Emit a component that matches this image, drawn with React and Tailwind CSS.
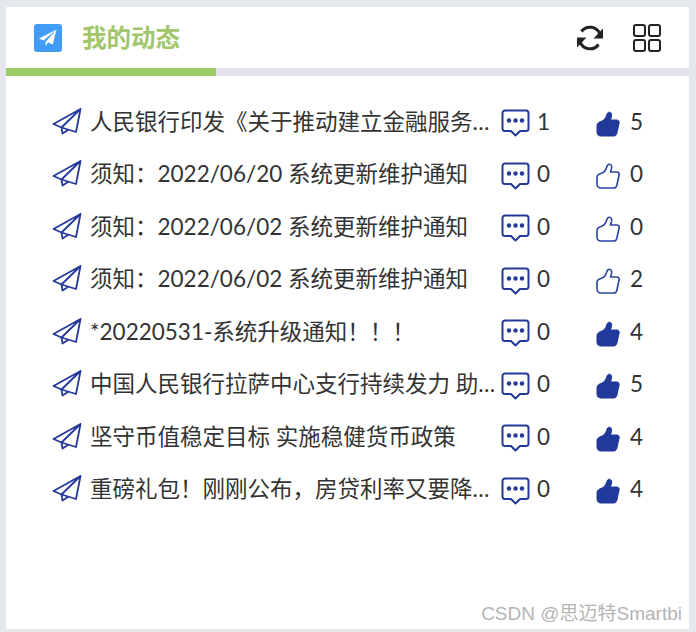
const rows = [
  { title: '人民银行印发《关于推动建立金融服务小微企业敢贷愿贷能贷会贷长效机制的通知》', comments: 1, likes: 5, liked: true },
  { title: '须知：2022/06/20 系统更新维护通知', comments: 0, likes: 0, liked: false },
  { title: '须知：2022/06/02 系统更新维护通知', comments: 0, likes: 0, liked: false },
  { title: '须知：2022/06/02 系统更新维护通知', comments: 0, likes: 2, liked: false },
  { title: '*20220531-系统升级通知！！！', comments: 0, likes: 4, liked: true },
  { title: '中国人民银行拉萨中心支行持续发力 助力小微企业发展', comments: 0, likes: 5, liked: true },
  { title: '坚守币值稳定目标 实施稳健货币政策', comments: 0, likes: 4, liked: true },
  { title: '重磅礼包！刚刚公布，房贷利率又要降了，买房人迎来好消息', comments: 0, likes: 4, liked: true },
];

function PlaneIcon() {
  return (
    <svg width="30" height="28" viewBox="0 0 30 28" fill="none" stroke="#24399a" strokeWidth="1.8" strokeLinejoin="round" strokeLinecap="round" className="-mt-[3px] shrink-0">
      <path d="M28.500 2 1.500 17l8 3.500L28.500 2l-4.500 23-14.500-4.500" />
      <path d="M9.500 20.500 10.500 26.500l5.500-3.500" />
    </svg>
  );
}

function CommentIcon() {
  return (
    <svg width="29" height="29" viewBox="0 0 29 29" fill="none" className="mt-[3px] shrink-0">
      <path d="M4 1.500h21a2.500 2.500 0 0 1 2.500 2.500v15.500a2.500 2.500 0 0 1-2.500 2.500h-6l-4.500 4.500-4.500-4.500H4a2.500 2.500 0 0 1-2.500-2.500V4A2.500 2.500 0 0 1 4 1.500Z" stroke="#24399a" strokeWidth="2" strokeLinejoin="round" />
      <circle cx="8" cy="11.500" r="2.200" fill="#24399a" />
      <circle cx="14.500" cy="11.500" r="2.200" fill="#24399a" />
      <circle cx="21" cy="11.500" r="2.200" fill="#24399a" />
    </svg>
  );
}

function ThumbIcon({ filled }) {
  return (
    <svg width="24" height="26" viewBox="0 0 24 26" className="mt-[3px] shrink-0" fill={filled ? '#20399a' : 'none'} stroke={filled ? '#20399a' : '#2b43a0'} strokeWidth={filled ? 1 : 1.6} strokeLinejoin="round">
      <path d="M1 14.500C1 12.500 3 11 5 10.500c3-1 4.800-3.500 5.500-6C11 2.500 11.800 1 13.500 1.200c2 .3 2.500 2.300 2 4.300l-1 3.500h6.300c1.800 0 2.700 1.500 2.300 3l-2.300 10.500c-.4 1.600-1.500 2.500-3 2.500H5c-2.500 0-4-1.500-4-4Z" />
    </svg>
  );
}

export default function App() {
  return (
    <div className="relative h-[632px] w-[696px] bg-[#e5e9ed] pb-[3px] pl-[6px] pr-[7px] pt-[7px] font-['Lato','Noto_Sans_CJK_SC',sans-serif]">
      <div className="flex h-full flex-col bg-white">
        <div className="flex h-[61px] items-center pl-[28px]">
          <div className="flex h-[28px] w-[28px] items-center justify-center rounded-[3px] bg-[#429bf7]">
            <svg width="20" height="20" viewBox="0 0 20 20" fill="white">
              <path d="M18.500 1.500 1 10.500l4.500 2L18.500 1.500 7.500 14v4l2.500-3.500 4.800 2Z" />
            </svg>
          </div>
          <span className="ml-[20px] mt-px text-[24.500px] font-bold leading-none text-[#a1c66b]">我的动态</span>
          <div className="ml-auto flex items-center">
            <svg width="30" height="30" viewBox="0 0 30 30" fill="none">
              <path d="M25 11.500A10.500 10.500 0 0 0 6.500 8.500" stroke="#222" strokeWidth="3" />
              <path d="M5 18.500a10.500 10.500 0 0 0 18.500 3" stroke="#222" strokeWidth="3" />
              <path d="M28 5.500v10h-9.500Z" fill="#222" />
              <path d="M2 24.500v-10h9.500Z" fill="#222" />
            </svg>
            <div className="ml-[28px] mr-[28px] grid grid-cols-2 gap-[2px]">
              {[0, 1, 2, 3].map((i) => (
                <div key={i} className="h-[13px] w-[13px] rounded-[3px] border-2 border-[#222]" />
              ))}
            </div>
          </div>
        </div>
        <div className="h-[8px] bg-[#e2e2e8]">
          <div className="h-full w-[210px] bg-[#9ccc65]" />
        </div>
        <div className="flex flex-col pl-[46px] pt-[20px]">
          {rows.map((row, index) => (
            <div key={index} className="flex h-[52.500px] items-center text-[22.500px] leading-none text-[#333]">
              <PlaneIcon />
              <div className="ml-[8px] w-[411px] shrink-0 truncate pb-[1px] leading-[30px]">{row.title}</div>
              <CommentIcon />
              <span className="ml-[7px] w-[59px] shrink-0 pb-[1px] leading-[30px]">{row.comments}</span>
              <ThumbIcon filled={row.liked} />
              <span className="ml-[10px] pb-[1px] leading-[30px]">{row.likes}</span>
            </div>
          ))}
        </div>
      </div>
      <span className="absolute bottom-[9px] right-[14px] font-['Liberation_Sans','Noto_Sans_CJK_SC',sans-serif] text-[19px] leading-none text-[#b4b4b4]">CSDN @思迈特Smartbi</span>
    </div>
  );
}
